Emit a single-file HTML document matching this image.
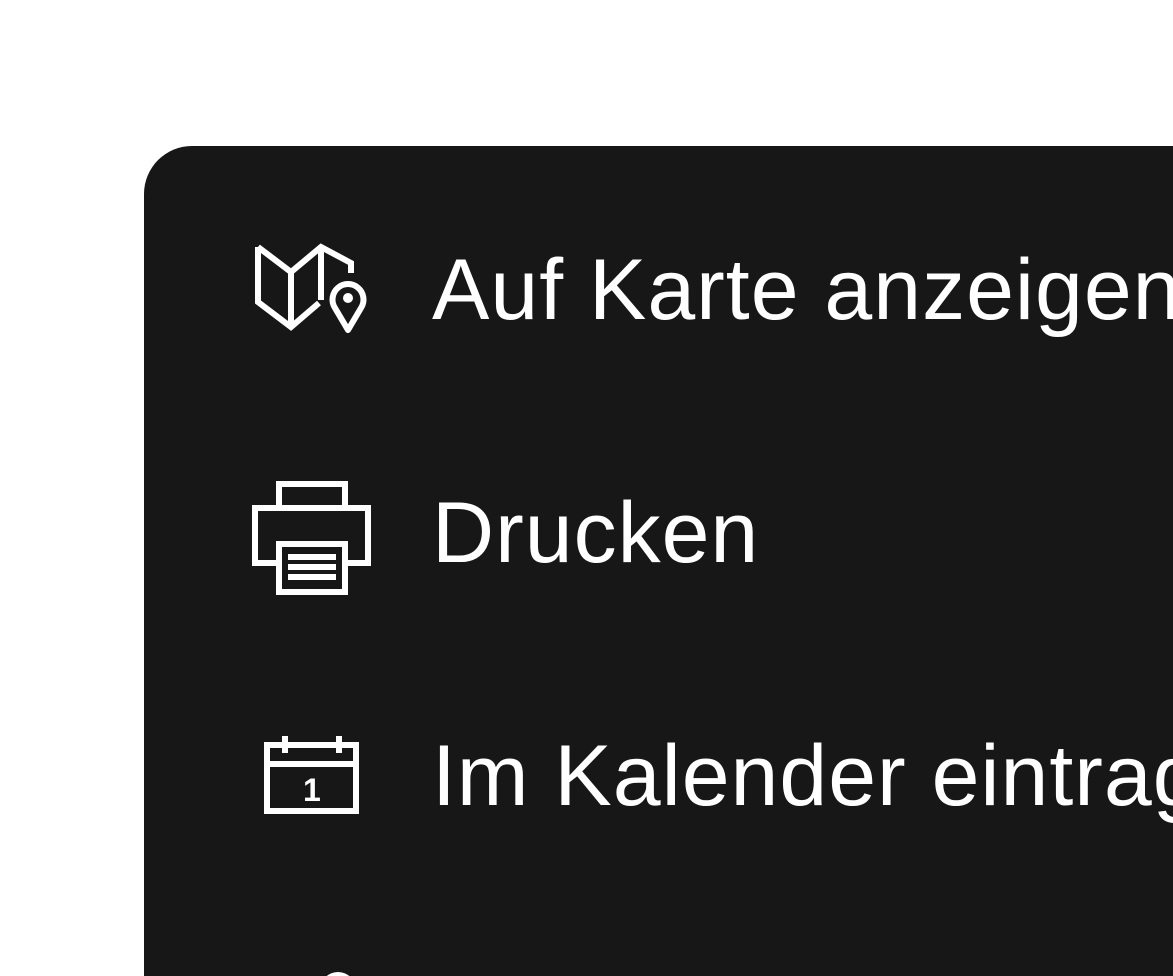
<!DOCTYPE html>
<html><head><style>
html,body{margin:0;padding:0;background:#fff;width:1173px;height:976px;overflow:hidden;position:relative}
.card{position:absolute;left:144px;top:146px;width:1029px;height:830px;background:#171717;border-radius:48px 0 0 0}
.t{position:absolute;left:432px;color:#fff;font-family:"Liberation Sans",sans-serif;font-size:86px;letter-spacing:1px;white-space:nowrap;line-height:1}
svg{position:absolute;left:0;top:0}
</style></head><body>
<div class="card"></div>
<svg width="1173" height="976" fill="none" stroke="#fff" stroke-width="6">
<path d="M258,247 L291,272 L321,247 L351,263 L351,273"/>
<path d="M258,247 L258,302 L291,327 L319,303"/>
<path d="M291,272 L291,327 M321,247 L321,300"/>
<path d="M348,330 L335,308 A15.5,15.5 0 1 1 361,308 Z" stroke-linejoin="round"/>
<circle cx="348" cy="298" r="5" fill="#fff" stroke="none"/>
<rect x="279" y="484" width="66" height="24"/>
<rect x="255" y="508" width="113" height="55"/>
<rect x="279" y="544" width="66" height="48" fill="#171717"/>
<path d="M288,557 H336 M288,567 H336 M288,577 H336"/>
<rect x="267" y="745" width="89" height="66"/>
<path d="M267,764 H356 M285,736 V753 M339,736 V753"/>
<circle cx="338" cy="990" r="18" fill="#fff" stroke="none"/>
</svg>
<div class="t" style="top:247px">Auf Karte anzeigen</div>
<div class="t" style="top:490px">Drucken</div>
<div class="t" style="top:733px">Im Kalender eintragen</div>
<div style="position:absolute;left:303px;top:772px;color:#fff;font:bold 32px 'Liberation Sans',sans-serif">1</div>
</body></html>
